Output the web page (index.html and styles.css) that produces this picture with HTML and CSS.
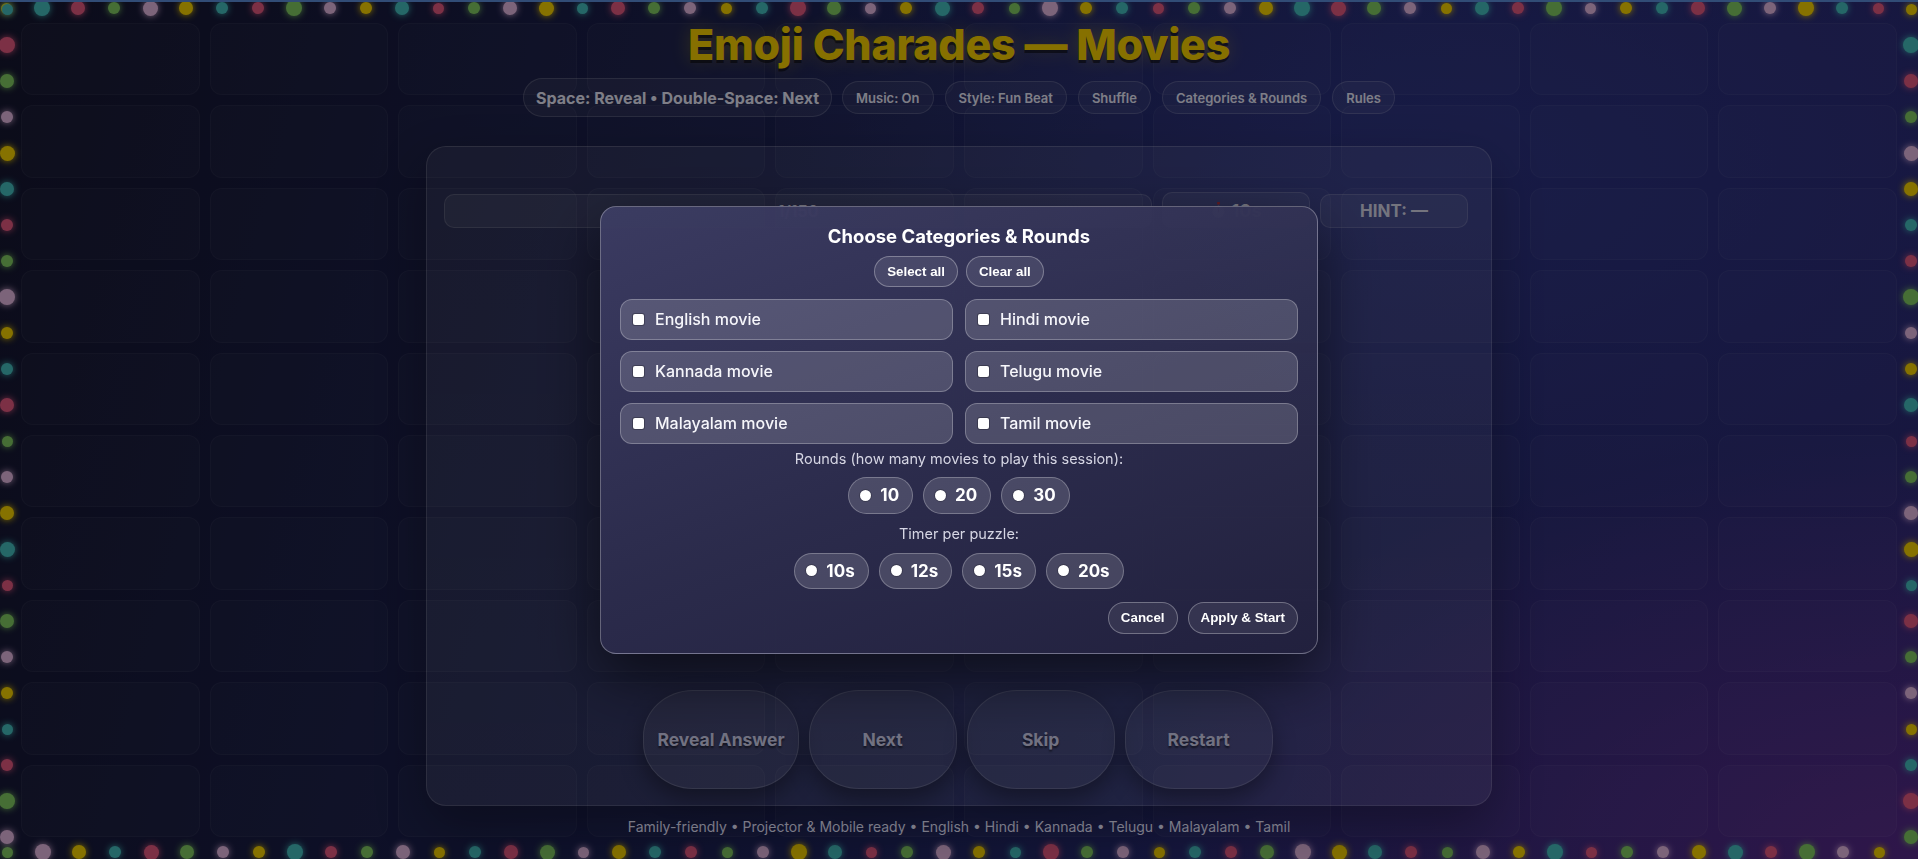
FILE: index.html
```html
<!DOCTYPE html>
<html lang="en">
<head>
<meta charset="utf-8">
<title>Emoji Charades — Movies</title>
<link rel="stylesheet" href="styles.css">
</head>
<body>
<div class="tiles" aria-hidden="true">
<i></i><i></i><i></i><i></i><i></i><i></i><i></i><i></i><i></i><i></i>
<i></i><i></i><i></i><i></i><i></i><i></i><i></i><i></i><i></i><i></i>
<i></i><i></i><i></i><i></i><i></i><i></i><i></i><i></i><i></i><i></i>
<i></i><i></i><i></i><i></i><i></i><i></i><i></i><i></i><i></i><i></i>
<i></i><i></i><i></i><i></i><i></i><i></i><i></i><i></i><i></i><i></i>
<i></i><i></i><i></i><i></i><i></i><i></i><i></i><i></i><i></i><i></i>
<i></i><i></i><i></i><i></i><i></i><i></i><i></i><i></i><i></i><i></i>
<i></i><i></i><i></i><i></i><i></i><i></i><i></i><i></i><i></i><i></i>
<i></i><i></i><i></i><i></i><i></i><i></i><i></i><i></i><i></i><i></i>
<i></i><i></i><i></i><i></i><i></i><i></i><i></i><i></i><i></i><i></i>
</div>

<div class="lights lights-top" aria-hidden="true">
<i></i><i></i><i></i><i></i><i></i><i></i><i></i><i></i><i></i><i></i>
<i></i><i></i><i></i><i></i><i></i><i></i><i></i><i></i><i></i><i></i>
<i></i><i></i><i></i><i></i><i></i><i></i><i></i><i></i><i></i><i></i>
<i></i><i></i><i></i><i></i><i></i><i></i><i></i><i></i><i></i><i></i>
<i></i><i></i><i></i><i></i><i></i><i></i><i></i><i></i><i></i><i></i>
<i></i><i></i><i></i>
</div>
<div class="lights lights-bottom" aria-hidden="true">
<i></i><i></i><i></i><i></i><i></i><i></i><i></i><i></i><i></i><i></i>
<i></i><i></i><i></i><i></i><i></i><i></i><i></i><i></i><i></i><i></i>
<i></i><i></i><i></i><i></i><i></i><i></i><i></i><i></i><i></i><i></i>
<i></i><i></i><i></i><i></i><i></i><i></i><i></i><i></i><i></i><i></i>
<i></i><i></i><i></i><i></i><i></i><i></i><i></i><i></i><i></i><i></i>
<i></i><i></i><i></i>
</div>
<div class="lights lights-left" aria-hidden="true">
<i></i><i></i><i></i><i></i><i></i><i></i><i></i><i></i><i></i><i></i>
<i></i><i></i><i></i><i></i><i></i><i></i><i></i><i></i><i></i><i></i>
<i></i><i></i><i></i><i></i>
</div>
<div class="lights lights-right" aria-hidden="true">
<i></i><i></i><i></i><i></i><i></i><i></i><i></i><i></i><i></i><i></i>
<i></i><i></i><i></i><i></i><i></i><i></i><i></i><i></i><i></i><i></i>
<i></i><i></i><i></i><i></i>
</div>
<div class="topline" aria-hidden="true"></div>

<main class="app">
  <h1 class="title">Emoji Charades — Movies</h1>
  <nav class="toolbar">
    <span class="chip chip-keys">Space: Reveal • Double-Space: Next</span>
    <button class="chip">Music: On</button>
    <button class="chip">Style: Fun Beat</button>
    <button class="chip">Shuffle</button>
    <button class="chip">Categories &amp; Rounds</button>
    <button class="chip">Rules</button>
  </nav>

  <section class="card">
    <div class="status">
      <div class="progress">1/150</div>
      <div class="timer">
        <svg class="timer-icon" viewBox="0 0 16 18" width="15" height="17" aria-hidden="true">
          <rect x="6.5" y="0" width="3" height="2.5" rx="0.6" fill="#b0303a"/>
          <circle cx="8" cy="10.5" r="6.5" fill="#d0d0dc"/>
          <circle cx="8" cy="10.5" r="5" fill="#f4f4f8"/>
          <path d="M8 10.5V6.8" stroke="#b0303a" stroke-width="1.4" stroke-linecap="round"/>
        </svg>
        <span>10s</span>
      </div>
      <div class="hint">HINT: —</div>
    </div>
    <div class="stage"></div>
    <div class="controls">
      <button class="ctl">Reveal Answer</button>
      <button class="ctl">Next</button>
      <button class="ctl">Skip</button>
      <button class="ctl">Restart</button>
    </div>
  </section>

  <footer class="foot">Family-friendly • Projector &amp; Mobile ready • English • Hindi • Kannada • Telugu • Malayalam • Tamil</footer>
</main>

<div class="overlay">
  <div class="modal" role="dialog" aria-labelledby="mtitle">
    <h2 class="modal-title" id="mtitle">Choose Categories &amp; Rounds</h2>
    <div class="modal-tools">
      <button class="mbtn">Select all</button>
      <button class="mbtn">Clear all</button>
    </div>
    <div class="cats">
      <label class="cat"><span class="box"></span>English movie</label>
      <label class="cat"><span class="box"></span>Hindi movie</label>
      <label class="cat"><span class="box"></span>Kannada movie</label>
      <label class="cat"><span class="box"></span>Telugu movie</label>
      <label class="cat"><span class="box"></span>Malayalam movie</label>
      <label class="cat"><span class="box"></span>Tamil movie</label>
    </div>
    <p class="mlabel">Rounds (how many movies to play this session):</p>
    <div class="opts">
      <label class="opt"><span class="radio"></span>10</label>
      <label class="opt"><span class="radio"></span>20</label>
      <label class="opt"><span class="radio"></span>30</label>
    </div>
    <p class="mlabel">Timer per puzzle:</p>
    <div class="opts opts-timer">
      <label class="opt"><span class="radio"></span>10s</label>
      <label class="opt"><span class="radio"></span>12s</label>
      <label class="opt"><span class="radio"></span>15s</label>
      <label class="opt"><span class="radio"></span>20s</label>
    </div>
    <div class="actions">
      <button class="mbtn mbtn-dark">Cancel</button>
      <button class="mbtn mbtn-dark">Apply &amp; Start</button>
    </div>
  </div>
</div>
</body>
</html>
```

FILE: styles.css
```css
* { box-sizing: border-box; }

html, body {
  margin: 0;
  width: 1918px;
  height: 859px;
  overflow: hidden;
}

body {
  position: relative;
  font-family: Inter, "Noto Sans", "Liberation Sans", sans-serif;
  color: #ececf8;
  background:
    radial-gradient(ellipse 60% 70% at 100% 100%, rgba(120, 40, 150, 0.55), rgba(120, 40, 150, 0) 70%),
    radial-gradient(ellipse 50% 60% at 75% 20%, rgba(50, 60, 150, 0.45), rgba(50, 60, 150, 0) 70%),
    linear-gradient(105deg, #15162f 0%, #1b2050 38%, #24296c 65%, #2c2a76 100%);
}

/* ---------- background tiles ---------- */
.tiles {
  position: absolute;
  inset: 0;
  padding: 23px 21px 22px 21px;
  display: grid;
  grid-template-columns: repeat(10, 1fr);
  grid-template-rows: repeat(10, 1fr);
  gap: 10px;
  z-index: 0;
}
.tiles i {
  border-radius: 12px;
  background: rgba(255, 255, 255, 0.025);
  border: 1px solid rgba(255, 255, 255, 0.045);
}

/* ---------- string lights ---------- */
.lights {
  position: absolute;
  display: flex;
  z-index: 1;
}
.lights-top { top: -10px; left: -12px; }
.lights-bottom { top: 834px; left: -11px; }
.lights-left { top: -9px; left: -11px; flex-direction: column; }
.lights-right { top: -9px; left: 1893px; flex-direction: column; }

.lights i {
  flex: none;
  width: 36px;
  height: 36px;
  display: flex;
  align-items: center;
  justify-content: center;
  color: #44bcbc;
}
.lights i::before {
  content: "";
  width: 12px;
  height: 12px;
  border-radius: 50%;
  background: currentColor;
  box-shadow: 0 0 7px currentColor;
}
.lights i:nth-child(3n)::before { width: 14px; height: 14px; }
.lights i:nth-child(4n+1)::before { width: 11px; height: 11px; }
.lights i:nth-child(7n+2)::before { width: 16px; height: 16px; }
.lights i:nth-child(11n+5)::before { width: 15px; height: 15px; }

/* palette: teal, pink, green, lavender, yellow */
.lights-top i:nth-child(5n+1),
.lights-right i:nth-child(5n+1) { color: #f5d000; }
.lights-top i:nth-child(5n+2),
.lights-right i:nth-child(5n+2) { color: #44bcbc; }
.lights-top i:nth-child(5n+3),
.lights-right i:nth-child(5n+3) { color: #e2587f; }
.lights-top i:nth-child(5n+4),
.lights-right i:nth-child(5n+4) { color: #80c862; }
.lights-top i:nth-child(5n+5),
.lights-right i:nth-child(5n+5) { color: #e2b6de; }

.lights-left i:nth-child(5n+1) { color: #44bcbc; }
.lights-left i:nth-child(5n+2) { color: #e2587f; }
.lights-left i:nth-child(5n+3) { color: #80c862; }
.lights-left i:nth-child(5n+4) { color: #e2b6de; }
.lights-left i:nth-child(5n+5) { color: #f5d000; }

.lights-bottom i:nth-child(5n+1) { color: #80c862; }
.lights-bottom i:nth-child(5n+2) { color: #e2b6de; }
.lights-bottom i:nth-child(5n+3) { color: #f5d000; }
.lights-bottom i:nth-child(5n+4) { color: #44bcbc; }
.lights-bottom i:nth-child(5n+5) { color: #e2587f; }

.topline {
  position: absolute;
  top: 0;
  left: 0;
  right: 0;
  height: 2px;
  background: #5a8ad8;
  z-index: 2;
}

/* ---------- app ---------- */
.app {
  position: relative;
  z-index: 2;
  height: 859px;
  padding-top: 18px;
  display: flex;
  flex-direction: column;
  align-items: center;
}

.title {
  margin: 0;
  font-size: 43px;
  line-height: 53px;
  font-weight: 800;
  letter-spacing: -0.3px;
  color: #f5cc00;
  text-shadow: 0 3px 0 rgba(0, 0, 0, 0.5), 0 0 18px rgba(255, 215, 0, 0.3);
}

.toolbar {
  margin-top: 7px;
  height: 39px;
  display: flex;
  align-items: center;
  gap: 11px;
}

.chip {
  height: 33px;
  padding: 0 13px;
  border-radius: 17px;
  border: 1px solid rgba(255, 255, 255, 0.16);
  background: rgba(255, 255, 255, 0.06);
  color: #e6e6f6;
  font-family: Inter, "Noto Sans", sans-serif;
  font-size: 13px;
  font-weight: 600;
  display: inline-flex;
  align-items: center;
  white-space: nowrap;
}
.chip-keys {
  height: 39px;
  border-radius: 20px;
  padding: 0 12px;
  font-size: 16px;
  font-weight: 700;
  margin-right: -1px;
}

.card {
  margin-top: 29px;
  width: 1066px;
  height: 660px;
  padding: 47px 23px 16px 17px;
  border-radius: 20px;
  border: 1px solid rgba(255, 255, 255, 0.16);
  background: linear-gradient(180deg, rgba(255, 255, 255, 0.07), rgba(255, 255, 255, 0.085));
  box-shadow: 0 20px 50px rgba(0, 0, 0, 0.3);
  display: flex;
  flex-direction: column;
}

.status {
  display: flex;
  gap: 10px;
  height: 34px;
}
.progress,
.timer,
.hint {
  border-radius: 10px;
  border: 1px solid rgba(255, 255, 255, 0.14);
  background: rgba(255, 255, 255, 0.07);
  display: flex;
  align-items: center;
  justify-content: center;
  font-weight: 700;
  color: #d4d4e6;
}
.progress {
  flex: 1;
  font-size: 16px;
}
.timer {
  width: 148px;
  gap: 6px;
  font-size: 18px;
  margin-top: -2px;
  height: 36px;
}
.timer-icon { flex: none; }
.hint {
  width: 148px;
  font-size: 17px;
}

.stage { flex: 1; }

.controls {
  display: flex;
  justify-content: center;
  gap: 10px;
  margin-left: 4px;
}
.ctl {
  min-width: 148px;
  height: 99px;
  padding: 0 13px;
  border-radius: 50px / 46px;
  border: 1px solid rgba(255, 255, 255, 0.17);
  background: rgba(255, 255, 255, 0.075);
  box-shadow: 0 10px 22px rgba(0, 0, 0, 0.35);
  color: #cfd0ec;
  font-family: Inter, "Noto Sans", sans-serif;
  font-size: 17.5px;
  font-weight: 700;
  text-shadow: 0 2px 2px rgba(0, 0, 0, 0.55);
}

.foot {
  margin-top: 12px;
  font-size: 14px;
  line-height: 18px;
  color: #dcdcf2;
}

/* ---------- modal ---------- */
.overlay {
  position: fixed;
  inset: 0;
  z-index: 10;
  background: rgba(0, 0, 0, 0.45);
  display: flex;
  align-items: center;
  justify-content: center;
}

.modal {
  width: 718px;
  padding: 17px 19px 19px 19px;
  border-radius: 16px;
  border: 1px solid rgba(255, 255, 255, 0.3);
  background: linear-gradient(160deg, rgba(60, 60, 98, 0.98) 0%, rgba(44, 44, 76, 0.98) 55%, rgba(34, 33, 62, 0.98) 100%);
  box-shadow: 0 24px 60px rgba(0, 0, 0, 0.55);
  display: flex;
  flex-direction: column;
  align-items: center;
}

.modal-title {
  margin: 0;
  font-size: 18.5px;
  line-height: 24px;
  font-weight: 700;
  color: #ffffff;
}

.modal-tools {
  margin-top: 8px;
  display: flex;
  gap: 8px;
}

.mbtn {
  height: 31px;
  padding: 0 12px;
  border-radius: 16px;
  border: 1px solid rgba(255, 255, 255, 0.3);
  background: rgba(255, 255, 255, 0.1);
  color: #ffffff;
  font-family: "Liberation Sans", Arial, sans-serif;
  font-size: 13.33px;
  font-weight: 700;
}
.mbtn-dark {
  height: 32px;
  background: rgba(255, 255, 255, 0.08);
}

.cats {
  margin-top: 12px;
  width: 100%;
  display: grid;
  grid-template-columns: 1fr 1fr;
  column-gap: 12px;
  row-gap: 11px;
}
.cat {
  height: 41px;
  padding-left: 12px;
  display: flex;
  align-items: center;
  gap: 11px;
  border-radius: 12px;
  border: 1px solid rgba(255, 255, 255, 0.26);
  background: rgba(255, 255, 255, 0.16);
  font-size: 16px;
  font-weight: 500;
  color: #f6f6fb;
}
.box {
  flex: none;
  width: 11px;
  height: 11px;
  border-radius: 2px;
  background: #ffffff;
  box-shadow: 0 0 0 1px rgba(0, 0, 0, 0.25);
}

.mlabel {
  margin: 6px 0 0;
  font-size: 14.5px;
  line-height: 17px;
  color: #d6d6e4;
}
.opts + .mlabel { margin-top: 11px; }

.opts {
  margin-top: 10px;
  display: flex;
  gap: 10px;
}
.opt {
  height: 37px;
  padding: 0 13px 0 11px;
  display: inline-flex;
  align-items: center;
  gap: 9px;
  border-radius: 19px;
  border: 1px solid rgba(255, 255, 255, 0.26);
  background: rgba(255, 255, 255, 0.15);
  font-size: 17px;
  font-weight: 700;
  color: #ffffff;
}
.opts-timer { margin-top: 11px; }
.opts-timer .opt { height: 36px; }
.radio {
  flex: none;
  width: 11px;
  height: 11px;
  border-radius: 50%;
  background: #ffffff;
  box-shadow: 0 0 0 1px rgba(0, 0, 0, 0.2);
}

.actions {
  margin-top: 13px;
  align-self: flex-end;
  display: flex;
  gap: 10px;
}
```
